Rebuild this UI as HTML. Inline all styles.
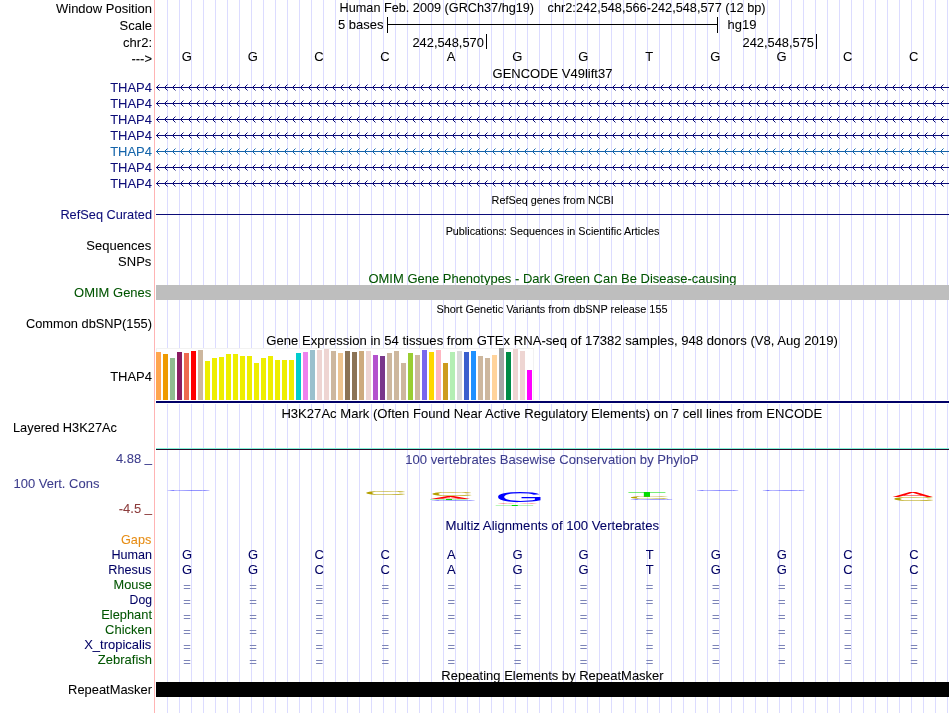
<!DOCTYPE html>
<html lang="en"><head><meta charset="utf-8"><title>UCSC Genome Browser hg19 chr2:242,548,566-242,548,577</title>
<style>html,body{margin:0;padding:0;background:#fff;width:950px;height:713px;overflow:hidden}svg{display:block;position:absolute;left:0;top:0;will-change:transform}text:not([transform]){transform:scaleY(1.045)}text{fill:currentColor;stroke:currentColor;stroke-width:.07px;color:#000;font-family:"Liberation Sans",Arial,Helvetica,sans-serif;font-size:13px;white-space:pre}.s{font-size:10px}.r{text-anchor:end}.m{text-anchor:middle}.n{color:#0c0c78}.g{color:#005500}.p{color:#3c3c8c}.mz{color:#000064}.eq{color:#7c84b8}text[transform]{stroke:none}</style></head><body>
<svg width="950" height="713" viewBox="0 0 950 713">
<path d="M167.5 0V713M179.5 0V713M191.5 0V713M203.5 0V713M215.5 0V713M227.5 0V713M239.5 0V713M251.5 0V713M263.5 0V713M275.5 0V713M287.5 0V713M299.5 0V713M311.5 0V713M323.5 0V713M335.5 0V713M347.5 0V713M359.5 0V713M371.5 0V713M383.5 0V713M395.5 0V713M407.5 0V713M419.5 0V713M431.5 0V713M443.5 0V713M455.5 0V713M467.5 0V713M479.5 0V713M491.5 0V713M503.5 0V713M515.5 0V713M527.5 0V713M539.5 0V713M551.5 0V713M563.5 0V713M575.5 0V713M587.5 0V713M599.5 0V713M611.5 0V713M623.5 0V713M635.5 0V713M647.5 0V713M659.5 0V713M671.5 0V713M683.5 0V713M695.5 0V713M707.5 0V713M719.5 0V713M731.5 0V713M743.5 0V713M755.5 0V713M767.5 0V713M779.5 0V713M791.5 0V713M803.5 0V713M815.5 0V713M827.5 0V713M839.5 0V713M851.5 0V713M863.5 0V713M875.5 0V713M887.5 0V713M899.5 0V713M911.5 0V713M923.5 0V713M935.5 0V713M947.5 0V713" stroke="#dcdcff" stroke-width="1" fill="none" shape-rendering="crispEdges"/>
<path d="M154.5 0V713" stroke="#ffb4b4" stroke-width="1" fill="none" shape-rendering="crispEdges"/>
<text x="152" y="12.44" class="r">Window Position</text>
<text x="152" y="28.71" class="r">Scale</text>
<text x="152" y="44.98" class="r">chr2:</text>
<text x="152" y="60.57" class="r">---&gt;</text>
<text x="339.6" y="11.48" textLength="194.5" lengthAdjust="spacingAndGlyphs">Human Feb. 2009 (GRCh37/hg19)</text>
<text x="547.6" y="11.48" textLength="218" lengthAdjust="spacingAndGlyphs">chr2:242,548,566-242,548,577 (12 bp)</text>
<text x="338" y="27.75">5 bases</text>
<text x="727.5" y="27.75">hg19</text>
<path d="M387.5 17V33M717.5 17V33M387 24.5H718" stroke="#000" stroke-width="1" fill="none" shape-rendering="crispEdges"/>
<text x="483.8" y="44.98" class="r" textLength="71.3" lengthAdjust="spacingAndGlyphs">242,548,570</text>
<text x="813.9" y="44.98" class="r" textLength="71.3" lengthAdjust="spacingAndGlyphs">242,548,575</text>
<path d="M486.5 34V49M816.5 34V49" stroke="#000" stroke-width="1" fill="none" shape-rendering="crispEdges"/>
<text x="186.7" y="58.37" class="m">G</text>
<text x="252.8" y="58.37" class="m">G</text>
<text x="318.9" y="58.37" class="m">C</text>
<text x="385.0" y="58.37" class="m">C</text>
<text x="451.1" y="58.37" class="m">A</text>
<text x="517.2" y="58.37" class="m">G</text>
<text x="583.2" y="58.37" class="m">G</text>
<text x="649.3" y="58.37" class="m">T</text>
<text x="715.4" y="58.37" class="m">G</text>
<text x="781.5" y="58.37" class="m">G</text>
<text x="847.6" y="58.37" class="m">C</text>
<text x="913.7" y="58.37" class="m">C</text>
<text x="552.5" y="74.64" class="m">GENCODE V49lift37</text>
<path d="M156 87.5H949" stroke="#0c0c78" stroke-width="1" fill="none" shape-rendering="crispEdges"/>
<path d="M159.5 84.5L156.5 87.5L159.5 90.5M167.5 84.5L164.5 87.5L167.5 90.5M175.5 84.5L172.5 87.5L175.5 90.5M183.5 84.5L180.5 87.5L183.5 90.5M191.5 84.5L188.5 87.5L191.5 90.5M199.5 84.5L196.5 87.5L199.5 90.5M207.5 84.5L204.5 87.5L207.5 90.5M215.5 84.5L212.5 87.5L215.5 90.5M223.5 84.5L220.5 87.5L223.5 90.5M231.5 84.5L228.5 87.5L231.5 90.5M239.5 84.5L236.5 87.5L239.5 90.5M247.5 84.5L244.5 87.5L247.5 90.5M255.5 84.5L252.5 87.5L255.5 90.5M263.5 84.5L260.5 87.5L263.5 90.5M271.5 84.5L268.5 87.5L271.5 90.5M279.5 84.5L276.5 87.5L279.5 90.5M287.5 84.5L284.5 87.5L287.5 90.5M295.5 84.5L292.5 87.5L295.5 90.5M303.5 84.5L300.5 87.5L303.5 90.5M311.5 84.5L308.5 87.5L311.5 90.5M319.5 84.5L316.5 87.5L319.5 90.5M327.5 84.5L324.5 87.5L327.5 90.5M335.5 84.5L332.5 87.5L335.5 90.5M343.5 84.5L340.5 87.5L343.5 90.5M351.5 84.5L348.5 87.5L351.5 90.5M359.5 84.5L356.5 87.5L359.5 90.5M367.5 84.5L364.5 87.5L367.5 90.5M375.5 84.5L372.5 87.5L375.5 90.5M383.5 84.5L380.5 87.5L383.5 90.5M391.5 84.5L388.5 87.5L391.5 90.5M399.5 84.5L396.5 87.5L399.5 90.5M407.5 84.5L404.5 87.5L407.5 90.5M415.5 84.5L412.5 87.5L415.5 90.5M423.5 84.5L420.5 87.5L423.5 90.5M431.5 84.5L428.5 87.5L431.5 90.5M439.5 84.5L436.5 87.5L439.5 90.5M447.5 84.5L444.5 87.5L447.5 90.5M455.5 84.5L452.5 87.5L455.5 90.5M463.5 84.5L460.5 87.5L463.5 90.5M471.5 84.5L468.5 87.5L471.5 90.5M479.5 84.5L476.5 87.5L479.5 90.5M487.5 84.5L484.5 87.5L487.5 90.5M495.5 84.5L492.5 87.5L495.5 90.5M503.5 84.5L500.5 87.5L503.5 90.5M511.5 84.5L508.5 87.5L511.5 90.5M519.5 84.5L516.5 87.5L519.5 90.5M527.5 84.5L524.5 87.5L527.5 90.5M535.5 84.5L532.5 87.5L535.5 90.5M543.5 84.5L540.5 87.5L543.5 90.5M551.5 84.5L548.5 87.5L551.5 90.5M559.5 84.5L556.5 87.5L559.5 90.5M567.5 84.5L564.5 87.5L567.5 90.5M575.5 84.5L572.5 87.5L575.5 90.5M583.5 84.5L580.5 87.5L583.5 90.5M591.5 84.5L588.5 87.5L591.5 90.5M599.5 84.5L596.5 87.5L599.5 90.5M607.5 84.5L604.5 87.5L607.5 90.5M615.5 84.5L612.5 87.5L615.5 90.5M623.5 84.5L620.5 87.5L623.5 90.5M631.5 84.5L628.5 87.5L631.5 90.5M639.5 84.5L636.5 87.5L639.5 90.5M647.5 84.5L644.5 87.5L647.5 90.5M655.5 84.5L652.5 87.5L655.5 90.5M663.5 84.5L660.5 87.5L663.5 90.5M671.5 84.5L668.5 87.5L671.5 90.5M679.5 84.5L676.5 87.5L679.5 90.5M687.5 84.5L684.5 87.5L687.5 90.5M695.5 84.5L692.5 87.5L695.5 90.5M703.5 84.5L700.5 87.5L703.5 90.5M711.5 84.5L708.5 87.5L711.5 90.5M719.5 84.5L716.5 87.5L719.5 90.5M727.5 84.5L724.5 87.5L727.5 90.5M735.5 84.5L732.5 87.5L735.5 90.5M743.5 84.5L740.5 87.5L743.5 90.5M751.5 84.5L748.5 87.5L751.5 90.5M759.5 84.5L756.5 87.5L759.5 90.5M767.5 84.5L764.5 87.5L767.5 90.5M775.5 84.5L772.5 87.5L775.5 90.5M783.5 84.5L780.5 87.5L783.5 90.5M791.5 84.5L788.5 87.5L791.5 90.5M799.5 84.5L796.5 87.5L799.5 90.5M807.5 84.5L804.5 87.5L807.5 90.5M815.5 84.5L812.5 87.5L815.5 90.5M823.5 84.5L820.5 87.5L823.5 90.5M831.5 84.5L828.5 87.5L831.5 90.5M839.5 84.5L836.5 87.5L839.5 90.5M847.5 84.5L844.5 87.5L847.5 90.5M855.5 84.5L852.5 87.5L855.5 90.5M863.5 84.5L860.5 87.5L863.5 90.5M871.5 84.5L868.5 87.5L871.5 90.5M879.5 84.5L876.5 87.5L879.5 90.5M887.5 84.5L884.5 87.5L887.5 90.5M895.5 84.5L892.5 87.5L895.5 90.5M903.5 84.5L900.5 87.5L903.5 90.5M911.5 84.5L908.5 87.5L911.5 90.5M919.5 84.5L916.5 87.5L919.5 90.5M927.5 84.5L924.5 87.5L927.5 90.5M935.5 84.5L932.5 87.5L935.5 90.5M943.5 84.5L940.5 87.5L943.5 90.5" stroke="#0c0c78" stroke-width="1" fill="none"/>
<text x="152" y="88.04" class="r" style="color:#0c0c78">THAP4</text>
<path d="M156 103.5H949" stroke="#0c0c78" stroke-width="1" fill="none" shape-rendering="crispEdges"/>
<path d="M159.5 100.5L156.5 103.5L159.5 106.5M167.5 100.5L164.5 103.5L167.5 106.5M175.5 100.5L172.5 103.5L175.5 106.5M183.5 100.5L180.5 103.5L183.5 106.5M191.5 100.5L188.5 103.5L191.5 106.5M199.5 100.5L196.5 103.5L199.5 106.5M207.5 100.5L204.5 103.5L207.5 106.5M215.5 100.5L212.5 103.5L215.5 106.5M223.5 100.5L220.5 103.5L223.5 106.5M231.5 100.5L228.5 103.5L231.5 106.5M239.5 100.5L236.5 103.5L239.5 106.5M247.5 100.5L244.5 103.5L247.5 106.5M255.5 100.5L252.5 103.5L255.5 106.5M263.5 100.5L260.5 103.5L263.5 106.5M271.5 100.5L268.5 103.5L271.5 106.5M279.5 100.5L276.5 103.5L279.5 106.5M287.5 100.5L284.5 103.5L287.5 106.5M295.5 100.5L292.5 103.5L295.5 106.5M303.5 100.5L300.5 103.5L303.5 106.5M311.5 100.5L308.5 103.5L311.5 106.5M319.5 100.5L316.5 103.5L319.5 106.5M327.5 100.5L324.5 103.5L327.5 106.5M335.5 100.5L332.5 103.5L335.5 106.5M343.5 100.5L340.5 103.5L343.5 106.5M351.5 100.5L348.5 103.5L351.5 106.5M359.5 100.5L356.5 103.5L359.5 106.5M367.5 100.5L364.5 103.5L367.5 106.5M375.5 100.5L372.5 103.5L375.5 106.5M383.5 100.5L380.5 103.5L383.5 106.5M391.5 100.5L388.5 103.5L391.5 106.5M399.5 100.5L396.5 103.5L399.5 106.5M407.5 100.5L404.5 103.5L407.5 106.5M415.5 100.5L412.5 103.5L415.5 106.5M423.5 100.5L420.5 103.5L423.5 106.5M431.5 100.5L428.5 103.5L431.5 106.5M439.5 100.5L436.5 103.5L439.5 106.5M447.5 100.5L444.5 103.5L447.5 106.5M455.5 100.5L452.5 103.5L455.5 106.5M463.5 100.5L460.5 103.5L463.5 106.5M471.5 100.5L468.5 103.5L471.5 106.5M479.5 100.5L476.5 103.5L479.5 106.5M487.5 100.5L484.5 103.5L487.5 106.5M495.5 100.5L492.5 103.5L495.5 106.5M503.5 100.5L500.5 103.5L503.5 106.5M511.5 100.5L508.5 103.5L511.5 106.5M519.5 100.5L516.5 103.5L519.5 106.5M527.5 100.5L524.5 103.5L527.5 106.5M535.5 100.5L532.5 103.5L535.5 106.5M543.5 100.5L540.5 103.5L543.5 106.5M551.5 100.5L548.5 103.5L551.5 106.5M559.5 100.5L556.5 103.5L559.5 106.5M567.5 100.5L564.5 103.5L567.5 106.5M575.5 100.5L572.5 103.5L575.5 106.5M583.5 100.5L580.5 103.5L583.5 106.5M591.5 100.5L588.5 103.5L591.5 106.5M599.5 100.5L596.5 103.5L599.5 106.5M607.5 100.5L604.5 103.5L607.5 106.5M615.5 100.5L612.5 103.5L615.5 106.5M623.5 100.5L620.5 103.5L623.5 106.5M631.5 100.5L628.5 103.5L631.5 106.5M639.5 100.5L636.5 103.5L639.5 106.5M647.5 100.5L644.5 103.5L647.5 106.5M655.5 100.5L652.5 103.5L655.5 106.5M663.5 100.5L660.5 103.5L663.5 106.5M671.5 100.5L668.5 103.5L671.5 106.5M679.5 100.5L676.5 103.5L679.5 106.5M687.5 100.5L684.5 103.5L687.5 106.5M695.5 100.5L692.5 103.5L695.5 106.5M703.5 100.5L700.5 103.5L703.5 106.5M711.5 100.5L708.5 103.5L711.5 106.5M719.5 100.5L716.5 103.5L719.5 106.5M727.5 100.5L724.5 103.5L727.5 106.5M735.5 100.5L732.5 103.5L735.5 106.5M743.5 100.5L740.5 103.5L743.5 106.5M751.5 100.5L748.5 103.5L751.5 106.5M759.5 100.5L756.5 103.5L759.5 106.5M767.5 100.5L764.5 103.5L767.5 106.5M775.5 100.5L772.5 103.5L775.5 106.5M783.5 100.5L780.5 103.5L783.5 106.5M791.5 100.5L788.5 103.5L791.5 106.5M799.5 100.5L796.5 103.5L799.5 106.5M807.5 100.5L804.5 103.5L807.5 106.5M815.5 100.5L812.5 103.5L815.5 106.5M823.5 100.5L820.5 103.5L823.5 106.5M831.5 100.5L828.5 103.5L831.5 106.5M839.5 100.5L836.5 103.5L839.5 106.5M847.5 100.5L844.5 103.5L847.5 106.5M855.5 100.5L852.5 103.5L855.5 106.5M863.5 100.5L860.5 103.5L863.5 106.5M871.5 100.5L868.5 103.5L871.5 106.5M879.5 100.5L876.5 103.5L879.5 106.5M887.5 100.5L884.5 103.5L887.5 106.5M895.5 100.5L892.5 103.5L895.5 106.5M903.5 100.5L900.5 103.5L903.5 106.5M911.5 100.5L908.5 103.5L911.5 106.5M919.5 100.5L916.5 103.5L919.5 106.5M927.5 100.5L924.5 103.5L927.5 106.5M935.5 100.5L932.5 103.5L935.5 106.5M943.5 100.5L940.5 103.5L943.5 106.5" stroke="#0c0c78" stroke-width="1" fill="none"/>
<text x="152" y="103.35" class="r" style="color:#0c0c78">THAP4</text>
<path d="M156 119.5H949" stroke="#0c0c78" stroke-width="1" fill="none" shape-rendering="crispEdges"/>
<path d="M159.5 116.5L156.5 119.5L159.5 122.5M167.5 116.5L164.5 119.5L167.5 122.5M175.5 116.5L172.5 119.5L175.5 122.5M183.5 116.5L180.5 119.5L183.5 122.5M191.5 116.5L188.5 119.5L191.5 122.5M199.5 116.5L196.5 119.5L199.5 122.5M207.5 116.5L204.5 119.5L207.5 122.5M215.5 116.5L212.5 119.5L215.5 122.5M223.5 116.5L220.5 119.5L223.5 122.5M231.5 116.5L228.5 119.5L231.5 122.5M239.5 116.5L236.5 119.5L239.5 122.5M247.5 116.5L244.5 119.5L247.5 122.5M255.5 116.5L252.5 119.5L255.5 122.5M263.5 116.5L260.5 119.5L263.5 122.5M271.5 116.5L268.5 119.5L271.5 122.5M279.5 116.5L276.5 119.5L279.5 122.5M287.5 116.5L284.5 119.5L287.5 122.5M295.5 116.5L292.5 119.5L295.5 122.5M303.5 116.5L300.5 119.5L303.5 122.5M311.5 116.5L308.5 119.5L311.5 122.5M319.5 116.5L316.5 119.5L319.5 122.5M327.5 116.5L324.5 119.5L327.5 122.5M335.5 116.5L332.5 119.5L335.5 122.5M343.5 116.5L340.5 119.5L343.5 122.5M351.5 116.5L348.5 119.5L351.5 122.5M359.5 116.5L356.5 119.5L359.5 122.5M367.5 116.5L364.5 119.5L367.5 122.5M375.5 116.5L372.5 119.5L375.5 122.5M383.5 116.5L380.5 119.5L383.5 122.5M391.5 116.5L388.5 119.5L391.5 122.5M399.5 116.5L396.5 119.5L399.5 122.5M407.5 116.5L404.5 119.5L407.5 122.5M415.5 116.5L412.5 119.5L415.5 122.5M423.5 116.5L420.5 119.5L423.5 122.5M431.5 116.5L428.5 119.5L431.5 122.5M439.5 116.5L436.5 119.5L439.5 122.5M447.5 116.5L444.5 119.5L447.5 122.5M455.5 116.5L452.5 119.5L455.5 122.5M463.5 116.5L460.5 119.5L463.5 122.5M471.5 116.5L468.5 119.5L471.5 122.5M479.5 116.5L476.5 119.5L479.5 122.5M487.5 116.5L484.5 119.5L487.5 122.5M495.5 116.5L492.5 119.5L495.5 122.5M503.5 116.5L500.5 119.5L503.5 122.5M511.5 116.5L508.5 119.5L511.5 122.5M519.5 116.5L516.5 119.5L519.5 122.5M527.5 116.5L524.5 119.5L527.5 122.5M535.5 116.5L532.5 119.5L535.5 122.5M543.5 116.5L540.5 119.5L543.5 122.5M551.5 116.5L548.5 119.5L551.5 122.5M559.5 116.5L556.5 119.5L559.5 122.5M567.5 116.5L564.5 119.5L567.5 122.5M575.5 116.5L572.5 119.5L575.5 122.5M583.5 116.5L580.5 119.5L583.5 122.5M591.5 116.5L588.5 119.5L591.5 122.5M599.5 116.5L596.5 119.5L599.5 122.5M607.5 116.5L604.5 119.5L607.5 122.5M615.5 116.5L612.5 119.5L615.5 122.5M623.5 116.5L620.5 119.5L623.5 122.5M631.5 116.5L628.5 119.5L631.5 122.5M639.5 116.5L636.5 119.5L639.5 122.5M647.5 116.5L644.5 119.5L647.5 122.5M655.5 116.5L652.5 119.5L655.5 122.5M663.5 116.5L660.5 119.5L663.5 122.5M671.5 116.5L668.5 119.5L671.5 122.5M679.5 116.5L676.5 119.5L679.5 122.5M687.5 116.5L684.5 119.5L687.5 122.5M695.5 116.5L692.5 119.5L695.5 122.5M703.5 116.5L700.5 119.5L703.5 122.5M711.5 116.5L708.5 119.5L711.5 122.5M719.5 116.5L716.5 119.5L719.5 122.5M727.5 116.5L724.5 119.5L727.5 122.5M735.5 116.5L732.5 119.5L735.5 122.5M743.5 116.5L740.5 119.5L743.5 122.5M751.5 116.5L748.5 119.5L751.5 122.5M759.5 116.5L756.5 119.5L759.5 122.5M767.5 116.5L764.5 119.5L767.5 122.5M775.5 116.5L772.5 119.5L775.5 122.5M783.5 116.5L780.5 119.5L783.5 122.5M791.5 116.5L788.5 119.5L791.5 122.5M799.5 116.5L796.5 119.5L799.5 122.5M807.5 116.5L804.5 119.5L807.5 122.5M815.5 116.5L812.5 119.5L815.5 122.5M823.5 116.5L820.5 119.5L823.5 122.5M831.5 116.5L828.5 119.5L831.5 122.5M839.5 116.5L836.5 119.5L839.5 122.5M847.5 116.5L844.5 119.5L847.5 122.5M855.5 116.5L852.5 119.5L855.5 122.5M863.5 116.5L860.5 119.5L863.5 122.5M871.5 116.5L868.5 119.5L871.5 122.5M879.5 116.5L876.5 119.5L879.5 122.5M887.5 116.5L884.5 119.5L887.5 122.5M895.5 116.5L892.5 119.5L895.5 122.5M903.5 116.5L900.5 119.5L903.5 122.5M911.5 116.5L908.5 119.5L911.5 122.5M919.5 116.5L916.5 119.5L919.5 122.5M927.5 116.5L924.5 119.5L927.5 122.5M935.5 116.5L932.5 119.5L935.5 122.5M943.5 116.5L940.5 119.5L943.5 122.5" stroke="#0c0c78" stroke-width="1" fill="none"/>
<text x="152" y="118.66" class="r" style="color:#0c0c78">THAP4</text>
<path d="M156 135.5H949" stroke="#0c0c78" stroke-width="1" fill="none" shape-rendering="crispEdges"/>
<path d="M159.5 132.5L156.5 135.5L159.5 138.5M167.5 132.5L164.5 135.5L167.5 138.5M175.5 132.5L172.5 135.5L175.5 138.5M183.5 132.5L180.5 135.5L183.5 138.5M191.5 132.5L188.5 135.5L191.5 138.5M199.5 132.5L196.5 135.5L199.5 138.5M207.5 132.5L204.5 135.5L207.5 138.5M215.5 132.5L212.5 135.5L215.5 138.5M223.5 132.5L220.5 135.5L223.5 138.5M231.5 132.5L228.5 135.5L231.5 138.5M239.5 132.5L236.5 135.5L239.5 138.5M247.5 132.5L244.5 135.5L247.5 138.5M255.5 132.5L252.5 135.5L255.5 138.5M263.5 132.5L260.5 135.5L263.5 138.5M271.5 132.5L268.5 135.5L271.5 138.5M279.5 132.5L276.5 135.5L279.5 138.5M287.5 132.5L284.5 135.5L287.5 138.5M295.5 132.5L292.5 135.5L295.5 138.5M303.5 132.5L300.5 135.5L303.5 138.5M311.5 132.5L308.5 135.5L311.5 138.5M319.5 132.5L316.5 135.5L319.5 138.5M327.5 132.5L324.5 135.5L327.5 138.5M335.5 132.5L332.5 135.5L335.5 138.5M343.5 132.5L340.5 135.5L343.5 138.5M351.5 132.5L348.5 135.5L351.5 138.5M359.5 132.5L356.5 135.5L359.5 138.5M367.5 132.5L364.5 135.5L367.5 138.5M375.5 132.5L372.5 135.5L375.5 138.5M383.5 132.5L380.5 135.5L383.5 138.5M391.5 132.5L388.5 135.5L391.5 138.5M399.5 132.5L396.5 135.5L399.5 138.5M407.5 132.5L404.5 135.5L407.5 138.5M415.5 132.5L412.5 135.5L415.5 138.5M423.5 132.5L420.5 135.5L423.5 138.5M431.5 132.5L428.5 135.5L431.5 138.5M439.5 132.5L436.5 135.5L439.5 138.5M447.5 132.5L444.5 135.5L447.5 138.5M455.5 132.5L452.5 135.5L455.5 138.5M463.5 132.5L460.5 135.5L463.5 138.5M471.5 132.5L468.5 135.5L471.5 138.5M479.5 132.5L476.5 135.5L479.5 138.5M487.5 132.5L484.5 135.5L487.5 138.5M495.5 132.5L492.5 135.5L495.5 138.5M503.5 132.5L500.5 135.5L503.5 138.5M511.5 132.5L508.5 135.5L511.5 138.5M519.5 132.5L516.5 135.5L519.5 138.5M527.5 132.5L524.5 135.5L527.5 138.5M535.5 132.5L532.5 135.5L535.5 138.5M543.5 132.5L540.5 135.5L543.5 138.5M551.5 132.5L548.5 135.5L551.5 138.5M559.5 132.5L556.5 135.5L559.5 138.5M567.5 132.5L564.5 135.5L567.5 138.5M575.5 132.5L572.5 135.5L575.5 138.5M583.5 132.5L580.5 135.5L583.5 138.5M591.5 132.5L588.5 135.5L591.5 138.5M599.5 132.5L596.5 135.5L599.5 138.5M607.5 132.5L604.5 135.5L607.5 138.5M615.5 132.5L612.5 135.5L615.5 138.5M623.5 132.5L620.5 135.5L623.5 138.5M631.5 132.5L628.5 135.5L631.5 138.5M639.5 132.5L636.5 135.5L639.5 138.5M647.5 132.5L644.5 135.5L647.5 138.5M655.5 132.5L652.5 135.5L655.5 138.5M663.5 132.5L660.5 135.5L663.5 138.5M671.5 132.5L668.5 135.5L671.5 138.5M679.5 132.5L676.5 135.5L679.5 138.5M687.5 132.5L684.5 135.5L687.5 138.5M695.5 132.5L692.5 135.5L695.5 138.5M703.5 132.5L700.5 135.5L703.5 138.5M711.5 132.5L708.5 135.5L711.5 138.5M719.5 132.5L716.5 135.5L719.5 138.5M727.5 132.5L724.5 135.5L727.5 138.5M735.5 132.5L732.5 135.5L735.5 138.5M743.5 132.5L740.5 135.5L743.5 138.5M751.5 132.5L748.5 135.5L751.5 138.5M759.5 132.5L756.5 135.5L759.5 138.5M767.5 132.5L764.5 135.5L767.5 138.5M775.5 132.5L772.5 135.5L775.5 138.5M783.5 132.5L780.5 135.5L783.5 138.5M791.5 132.5L788.5 135.5L791.5 138.5M799.5 132.5L796.5 135.5L799.5 138.5M807.5 132.5L804.5 135.5L807.5 138.5M815.5 132.5L812.5 135.5L815.5 138.5M823.5 132.5L820.5 135.5L823.5 138.5M831.5 132.5L828.5 135.5L831.5 138.5M839.5 132.5L836.5 135.5L839.5 138.5M847.5 132.5L844.5 135.5L847.5 138.5M855.5 132.5L852.5 135.5L855.5 138.5M863.5 132.5L860.5 135.5L863.5 138.5M871.5 132.5L868.5 135.5L871.5 138.5M879.5 132.5L876.5 135.5L879.5 138.5M887.5 132.5L884.5 135.5L887.5 138.5M895.5 132.5L892.5 135.5L895.5 138.5M903.5 132.5L900.5 135.5L903.5 138.5M911.5 132.5L908.5 135.5L911.5 138.5M919.5 132.5L916.5 135.5L919.5 138.5M927.5 132.5L924.5 135.5L927.5 138.5M935.5 132.5L932.5 135.5L935.5 138.5M943.5 132.5L940.5 135.5L943.5 138.5" stroke="#0c0c78" stroke-width="1" fill="none"/>
<text x="152" y="133.97" class="r" style="color:#0c0c78">THAP4</text>
<path d="M156 151.5H949" stroke="#1464aa" stroke-width="1" fill="none" shape-rendering="crispEdges"/>
<path d="M159.5 148.5L156.5 151.5L159.5 154.5M167.5 148.5L164.5 151.5L167.5 154.5M175.5 148.5L172.5 151.5L175.5 154.5M183.5 148.5L180.5 151.5L183.5 154.5M191.5 148.5L188.5 151.5L191.5 154.5M199.5 148.5L196.5 151.5L199.5 154.5M207.5 148.5L204.5 151.5L207.5 154.5M215.5 148.5L212.5 151.5L215.5 154.5M223.5 148.5L220.5 151.5L223.5 154.5M231.5 148.5L228.5 151.5L231.5 154.5M239.5 148.5L236.5 151.5L239.5 154.5M247.5 148.5L244.5 151.5L247.5 154.5M255.5 148.5L252.5 151.5L255.5 154.5M263.5 148.5L260.5 151.5L263.5 154.5M271.5 148.5L268.5 151.5L271.5 154.5M279.5 148.5L276.5 151.5L279.5 154.5M287.5 148.5L284.5 151.5L287.5 154.5M295.5 148.5L292.5 151.5L295.5 154.5M303.5 148.5L300.5 151.5L303.5 154.5M311.5 148.5L308.5 151.5L311.5 154.5M319.5 148.5L316.5 151.5L319.5 154.5M327.5 148.5L324.5 151.5L327.5 154.5M335.5 148.5L332.5 151.5L335.5 154.5M343.5 148.5L340.5 151.5L343.5 154.5M351.5 148.5L348.5 151.5L351.5 154.5M359.5 148.5L356.5 151.5L359.5 154.5M367.5 148.5L364.5 151.5L367.5 154.5M375.5 148.5L372.5 151.5L375.5 154.5M383.5 148.5L380.5 151.5L383.5 154.5M391.5 148.5L388.5 151.5L391.5 154.5M399.5 148.5L396.5 151.5L399.5 154.5M407.5 148.5L404.5 151.5L407.5 154.5M415.5 148.5L412.5 151.5L415.5 154.5M423.5 148.5L420.5 151.5L423.5 154.5M431.5 148.5L428.5 151.5L431.5 154.5M439.5 148.5L436.5 151.5L439.5 154.5M447.5 148.5L444.5 151.5L447.5 154.5M455.5 148.5L452.5 151.5L455.5 154.5M463.5 148.5L460.5 151.5L463.5 154.5M471.5 148.5L468.5 151.5L471.5 154.5M479.5 148.5L476.5 151.5L479.5 154.5M487.5 148.5L484.5 151.5L487.5 154.5M495.5 148.5L492.5 151.5L495.5 154.5M503.5 148.5L500.5 151.5L503.5 154.5M511.5 148.5L508.5 151.5L511.5 154.5M519.5 148.5L516.5 151.5L519.5 154.5M527.5 148.5L524.5 151.5L527.5 154.5M535.5 148.5L532.5 151.5L535.5 154.5M543.5 148.5L540.5 151.5L543.5 154.5M551.5 148.5L548.5 151.5L551.5 154.5M559.5 148.5L556.5 151.5L559.5 154.5M567.5 148.5L564.5 151.5L567.5 154.5M575.5 148.5L572.5 151.5L575.5 154.5M583.5 148.5L580.5 151.5L583.5 154.5M591.5 148.5L588.5 151.5L591.5 154.5M599.5 148.5L596.5 151.5L599.5 154.5M607.5 148.5L604.5 151.5L607.5 154.5M615.5 148.5L612.5 151.5L615.5 154.5M623.5 148.5L620.5 151.5L623.5 154.5M631.5 148.5L628.5 151.5L631.5 154.5M639.5 148.5L636.5 151.5L639.5 154.5M647.5 148.5L644.5 151.5L647.5 154.5M655.5 148.5L652.5 151.5L655.5 154.5M663.5 148.5L660.5 151.5L663.5 154.5M671.5 148.5L668.5 151.5L671.5 154.5M679.5 148.5L676.5 151.5L679.5 154.5M687.5 148.5L684.5 151.5L687.5 154.5M695.5 148.5L692.5 151.5L695.5 154.5M703.5 148.5L700.5 151.5L703.5 154.5M711.5 148.5L708.5 151.5L711.5 154.5M719.5 148.5L716.5 151.5L719.5 154.5M727.5 148.5L724.5 151.5L727.5 154.5M735.5 148.5L732.5 151.5L735.5 154.5M743.5 148.5L740.5 151.5L743.5 154.5M751.5 148.5L748.5 151.5L751.5 154.5M759.5 148.5L756.5 151.5L759.5 154.5M767.5 148.5L764.5 151.5L767.5 154.5M775.5 148.5L772.5 151.5L775.5 154.5M783.5 148.5L780.5 151.5L783.5 154.5M791.5 148.5L788.5 151.5L791.5 154.5M799.5 148.5L796.5 151.5L799.5 154.5M807.5 148.5L804.5 151.5L807.5 154.5M815.5 148.5L812.5 151.5L815.5 154.5M823.5 148.5L820.5 151.5L823.5 154.5M831.5 148.5L828.5 151.5L831.5 154.5M839.5 148.5L836.5 151.5L839.5 154.5M847.5 148.5L844.5 151.5L847.5 154.5M855.5 148.5L852.5 151.5L855.5 154.5M863.5 148.5L860.5 151.5L863.5 154.5M871.5 148.5L868.5 151.5L871.5 154.5M879.5 148.5L876.5 151.5L879.5 154.5M887.5 148.5L884.5 151.5L887.5 154.5M895.5 148.5L892.5 151.5L895.5 154.5M903.5 148.5L900.5 151.5L903.5 154.5M911.5 148.5L908.5 151.5L911.5 154.5M919.5 148.5L916.5 151.5L919.5 154.5M927.5 148.5L924.5 151.5L927.5 154.5M935.5 148.5L932.5 151.5L935.5 154.5M943.5 148.5L940.5 151.5L943.5 154.5" stroke="#1464aa" stroke-width="1" fill="none"/>
<text x="152" y="149.28" class="r" style="color:#1464aa">THAP4</text>
<path d="M156 167.5H949" stroke="#0c0c78" stroke-width="1" fill="none" shape-rendering="crispEdges"/>
<path d="M159.5 164.5L156.5 167.5L159.5 170.5M167.5 164.5L164.5 167.5L167.5 170.5M175.5 164.5L172.5 167.5L175.5 170.5M183.5 164.5L180.5 167.5L183.5 170.5M191.5 164.5L188.5 167.5L191.5 170.5M199.5 164.5L196.5 167.5L199.5 170.5M207.5 164.5L204.5 167.5L207.5 170.5M215.5 164.5L212.5 167.5L215.5 170.5M223.5 164.5L220.5 167.5L223.5 170.5M231.5 164.5L228.5 167.5L231.5 170.5M239.5 164.5L236.5 167.5L239.5 170.5M247.5 164.5L244.5 167.5L247.5 170.5M255.5 164.5L252.5 167.5L255.5 170.5M263.5 164.5L260.5 167.5L263.5 170.5M271.5 164.5L268.5 167.5L271.5 170.5M279.5 164.5L276.5 167.5L279.5 170.5M287.5 164.5L284.5 167.5L287.5 170.5M295.5 164.5L292.5 167.5L295.5 170.5M303.5 164.5L300.5 167.5L303.5 170.5M311.5 164.5L308.5 167.5L311.5 170.5M319.5 164.5L316.5 167.5L319.5 170.5M327.5 164.5L324.5 167.5L327.5 170.5M335.5 164.5L332.5 167.5L335.5 170.5M343.5 164.5L340.5 167.5L343.5 170.5M351.5 164.5L348.5 167.5L351.5 170.5M359.5 164.5L356.5 167.5L359.5 170.5M367.5 164.5L364.5 167.5L367.5 170.5M375.5 164.5L372.5 167.5L375.5 170.5M383.5 164.5L380.5 167.5L383.5 170.5M391.5 164.5L388.5 167.5L391.5 170.5M399.5 164.5L396.5 167.5L399.5 170.5M407.5 164.5L404.5 167.5L407.5 170.5M415.5 164.5L412.5 167.5L415.5 170.5M423.5 164.5L420.5 167.5L423.5 170.5M431.5 164.5L428.5 167.5L431.5 170.5M439.5 164.5L436.5 167.5L439.5 170.5M447.5 164.5L444.5 167.5L447.5 170.5M455.5 164.5L452.5 167.5L455.5 170.5M463.5 164.5L460.5 167.5L463.5 170.5M471.5 164.5L468.5 167.5L471.5 170.5M479.5 164.5L476.5 167.5L479.5 170.5M487.5 164.5L484.5 167.5L487.5 170.5M495.5 164.5L492.5 167.5L495.5 170.5M503.5 164.5L500.5 167.5L503.5 170.5M511.5 164.5L508.5 167.5L511.5 170.5M519.5 164.5L516.5 167.5L519.5 170.5M527.5 164.5L524.5 167.5L527.5 170.5M535.5 164.5L532.5 167.5L535.5 170.5M543.5 164.5L540.5 167.5L543.5 170.5M551.5 164.5L548.5 167.5L551.5 170.5M559.5 164.5L556.5 167.5L559.5 170.5M567.5 164.5L564.5 167.5L567.5 170.5M575.5 164.5L572.5 167.5L575.5 170.5M583.5 164.5L580.5 167.5L583.5 170.5M591.5 164.5L588.5 167.5L591.5 170.5M599.5 164.5L596.5 167.5L599.5 170.5M607.5 164.5L604.5 167.5L607.5 170.5M615.5 164.5L612.5 167.5L615.5 170.5M623.5 164.5L620.5 167.5L623.5 170.5M631.5 164.5L628.5 167.5L631.5 170.5M639.5 164.5L636.5 167.5L639.5 170.5M647.5 164.5L644.5 167.5L647.5 170.5M655.5 164.5L652.5 167.5L655.5 170.5M663.5 164.5L660.5 167.5L663.5 170.5M671.5 164.5L668.5 167.5L671.5 170.5M679.5 164.5L676.5 167.5L679.5 170.5M687.5 164.5L684.5 167.5L687.5 170.5M695.5 164.5L692.5 167.5L695.5 170.5M703.5 164.5L700.5 167.5L703.5 170.5M711.5 164.5L708.5 167.5L711.5 170.5M719.5 164.5L716.5 167.5L719.5 170.5M727.5 164.5L724.5 167.5L727.5 170.5M735.5 164.5L732.5 167.5L735.5 170.5M743.5 164.5L740.5 167.5L743.5 170.5M751.5 164.5L748.5 167.5L751.5 170.5M759.5 164.5L756.5 167.5L759.5 170.5M767.5 164.5L764.5 167.5L767.5 170.5M775.5 164.5L772.5 167.5L775.5 170.5M783.5 164.5L780.5 167.5L783.5 170.5M791.5 164.5L788.5 167.5L791.5 170.5M799.5 164.5L796.5 167.5L799.5 170.5M807.5 164.5L804.5 167.5L807.5 170.5M815.5 164.5L812.5 167.5L815.5 170.5M823.5 164.5L820.5 167.5L823.5 170.5M831.5 164.5L828.5 167.5L831.5 170.5M839.5 164.5L836.5 167.5L839.5 170.5M847.5 164.5L844.5 167.5L847.5 170.5M855.5 164.5L852.5 167.5L855.5 170.5M863.5 164.5L860.5 167.5L863.5 170.5M871.5 164.5L868.5 167.5L871.5 170.5M879.5 164.5L876.5 167.5L879.5 170.5M887.5 164.5L884.5 167.5L887.5 170.5M895.5 164.5L892.5 167.5L895.5 170.5M903.5 164.5L900.5 167.5L903.5 170.5M911.5 164.5L908.5 167.5L911.5 170.5M919.5 164.5L916.5 167.5L919.5 170.5M927.5 164.5L924.5 167.5L927.5 170.5M935.5 164.5L932.5 167.5L935.5 170.5M943.5 164.5L940.5 167.5L943.5 170.5" stroke="#0c0c78" stroke-width="1" fill="none"/>
<text x="152" y="164.59" class="r" style="color:#0c0c78">THAP4</text>
<path d="M156 183.5H949" stroke="#0c0c78" stroke-width="1" fill="none" shape-rendering="crispEdges"/>
<path d="M159.5 180.5L156.5 183.5L159.5 186.5M167.5 180.5L164.5 183.5L167.5 186.5M175.5 180.5L172.5 183.5L175.5 186.5M183.5 180.5L180.5 183.5L183.5 186.5M191.5 180.5L188.5 183.5L191.5 186.5M199.5 180.5L196.5 183.5L199.5 186.5M207.5 180.5L204.5 183.5L207.5 186.5M215.5 180.5L212.5 183.5L215.5 186.5M223.5 180.5L220.5 183.5L223.5 186.5M231.5 180.5L228.5 183.5L231.5 186.5M239.5 180.5L236.5 183.5L239.5 186.5M247.5 180.5L244.5 183.5L247.5 186.5M255.5 180.5L252.5 183.5L255.5 186.5M263.5 180.5L260.5 183.5L263.5 186.5M271.5 180.5L268.5 183.5L271.5 186.5M279.5 180.5L276.5 183.5L279.5 186.5M287.5 180.5L284.5 183.5L287.5 186.5M295.5 180.5L292.5 183.5L295.5 186.5M303.5 180.5L300.5 183.5L303.5 186.5M311.5 180.5L308.5 183.5L311.5 186.5M319.5 180.5L316.5 183.5L319.5 186.5M327.5 180.5L324.5 183.5L327.5 186.5M335.5 180.5L332.5 183.5L335.5 186.5M343.5 180.5L340.5 183.5L343.5 186.5M351.5 180.5L348.5 183.5L351.5 186.5M359.5 180.5L356.5 183.5L359.5 186.5M367.5 180.5L364.5 183.5L367.5 186.5M375.5 180.5L372.5 183.5L375.5 186.5M383.5 180.5L380.5 183.5L383.5 186.5M391.5 180.5L388.5 183.5L391.5 186.5M399.5 180.5L396.5 183.5L399.5 186.5M407.5 180.5L404.5 183.5L407.5 186.5M415.5 180.5L412.5 183.5L415.5 186.5M423.5 180.5L420.5 183.5L423.5 186.5M431.5 180.5L428.5 183.5L431.5 186.5M439.5 180.5L436.5 183.5L439.5 186.5M447.5 180.5L444.5 183.5L447.5 186.5M455.5 180.5L452.5 183.5L455.5 186.5M463.5 180.5L460.5 183.5L463.5 186.5M471.5 180.5L468.5 183.5L471.5 186.5M479.5 180.5L476.5 183.5L479.5 186.5M487.5 180.5L484.5 183.5L487.5 186.5M495.5 180.5L492.5 183.5L495.5 186.5M503.5 180.5L500.5 183.5L503.5 186.5M511.5 180.5L508.5 183.5L511.5 186.5M519.5 180.5L516.5 183.5L519.5 186.5M527.5 180.5L524.5 183.5L527.5 186.5M535.5 180.5L532.5 183.5L535.5 186.5M543.5 180.5L540.5 183.5L543.5 186.5M551.5 180.5L548.5 183.5L551.5 186.5M559.5 180.5L556.5 183.5L559.5 186.5M567.5 180.5L564.5 183.5L567.5 186.5M575.5 180.5L572.5 183.5L575.5 186.5M583.5 180.5L580.5 183.5L583.5 186.5M591.5 180.5L588.5 183.5L591.5 186.5M599.5 180.5L596.5 183.5L599.5 186.5M607.5 180.5L604.5 183.5L607.5 186.5M615.5 180.5L612.5 183.5L615.5 186.5M623.5 180.5L620.5 183.5L623.5 186.5M631.5 180.5L628.5 183.5L631.5 186.5M639.5 180.5L636.5 183.5L639.5 186.5M647.5 180.5L644.5 183.5L647.5 186.5M655.5 180.5L652.5 183.5L655.5 186.5M663.5 180.5L660.5 183.5L663.5 186.5M671.5 180.5L668.5 183.5L671.5 186.5M679.5 180.5L676.5 183.5L679.5 186.5M687.5 180.5L684.5 183.5L687.5 186.5M695.5 180.5L692.5 183.5L695.5 186.5M703.5 180.5L700.5 183.5L703.5 186.5M711.5 180.5L708.5 183.5L711.5 186.5M719.5 180.5L716.5 183.5L719.5 186.5M727.5 180.5L724.5 183.5L727.5 186.5M735.5 180.5L732.5 183.5L735.5 186.5M743.5 180.5L740.5 183.5L743.5 186.5M751.5 180.5L748.5 183.5L751.5 186.5M759.5 180.5L756.5 183.5L759.5 186.5M767.5 180.5L764.5 183.5L767.5 186.5M775.5 180.5L772.5 183.5L775.5 186.5M783.5 180.5L780.5 183.5L783.5 186.5M791.5 180.5L788.5 183.5L791.5 186.5M799.5 180.5L796.5 183.5L799.5 186.5M807.5 180.5L804.5 183.5L807.5 186.5M815.5 180.5L812.5 183.5L815.5 186.5M823.5 180.5L820.5 183.5L823.5 186.5M831.5 180.5L828.5 183.5L831.5 186.5M839.5 180.5L836.5 183.5L839.5 186.5M847.5 180.5L844.5 183.5L847.5 186.5M855.5 180.5L852.5 183.5L855.5 186.5M863.5 180.5L860.5 183.5L863.5 186.5M871.5 180.5L868.5 183.5L871.5 186.5M879.5 180.5L876.5 183.5L879.5 186.5M887.5 180.5L884.5 183.5L887.5 186.5M895.5 180.5L892.5 183.5L895.5 186.5M903.5 180.5L900.5 183.5L903.5 186.5M911.5 180.5L908.5 183.5L911.5 186.5M919.5 180.5L916.5 183.5L919.5 186.5M927.5 180.5L924.5 183.5L927.5 186.5M935.5 180.5L932.5 183.5L935.5 186.5M943.5 180.5L940.5 183.5L943.5 186.5" stroke="#0c0c78" stroke-width="1" fill="none"/>
<text x="152" y="179.9" class="r" style="color:#0c0c78">THAP4</text>
<text x="552.7" y="195.22" class="m s" textLength="122.2" lengthAdjust="spacingAndGlyphs">RefSeq genes from NCBI</text>
<text x="152" y="209.57" class="r n" textLength="91.6" lengthAdjust="spacingAndGlyphs">RefSeq Curated</text>
<path d="M156 214.5H949" stroke="#0c0c78" stroke-width="1" fill="none" shape-rendering="crispEdges"/>
<text x="552.5" y="224.88" class="m s" textLength="213.7" lengthAdjust="spacingAndGlyphs">Publications: Sequences in Scientific Articles</text>
<text x="151.3" y="239.23" class="r">Sequences</text>
<text x="151.3" y="254.55" class="r">SNPs</text>
<text x="552.5" y="270.81" class="m g">OMIM Gene Phenotypes - Dark Green Can Be Disease-causing</text>
<text x="151.3" y="284.21" class="r g">OMIM Genes</text>
<rect x="156" y="285" width="793" height="15" fill="#bebebe"/>
<text x="552" y="299.52" class="m s" textLength="231.1" lengthAdjust="spacingAndGlyphs">Short Genetic Variants from dbSNP release 155</text>
<text x="152" y="313.88" class="r" textLength="126" lengthAdjust="spacingAndGlyphs">Common dbSNP(155)</text>
<rect x="156.5" y="348.5" width="377" height="52" fill="#fff" stroke="#f2f2f2" shape-rendering="crispEdges"/>
<rect x="156" y="352" width="5" height="48" fill="#FFA54F"/>
<rect x="163" y="354" width="5" height="46" fill="#EE9A00"/>
<rect x="170" y="358" width="5" height="42" fill="#8FBC8F"/>
<rect x="177" y="352" width="5" height="48" fill="#8B1C62"/>
<rect x="184" y="353" width="5" height="47" fill="#EE6A50"/>
<rect x="191" y="351" width="5" height="49" fill="#FF0000"/>
<rect x="198" y="350" width="5" height="50" fill="#CDB79E"/>
<rect x="205" y="361" width="5" height="39" fill="#EEEE00"/>
<rect x="212" y="358" width="5" height="42" fill="#EEEE00"/>
<rect x="219" y="357" width="5" height="43" fill="#EEEE00"/>
<rect x="226" y="354" width="5" height="46" fill="#EEEE00"/>
<rect x="233" y="354" width="5" height="46" fill="#EEEE00"/>
<rect x="240" y="356" width="5" height="44" fill="#EEEE00"/>
<rect x="247" y="356" width="5" height="44" fill="#EEEE00"/>
<rect x="254" y="363" width="5" height="37" fill="#EEEE00"/>
<rect x="261" y="358" width="5" height="42" fill="#EEEE00"/>
<rect x="268" y="356" width="5" height="44" fill="#EEEE00"/>
<rect x="275" y="360" width="5" height="40" fill="#EEEE00"/>
<rect x="282" y="360" width="5" height="40" fill="#EEEE00"/>
<rect x="289" y="360" width="5" height="40" fill="#EEEE00"/>
<rect x="296" y="353" width="5" height="47" fill="#00CDCD"/>
<rect x="303" y="352" width="5" height="48" fill="#EE82EE"/>
<rect x="310" y="350" width="5" height="50" fill="#9AC0CD"/>
<rect x="317" y="350" width="5" height="50" fill="#EED5D2"/>
<rect x="324" y="349" width="5" height="51" fill="#EED5D2"/>
<rect x="331" y="351" width="5" height="49" fill="#CDB79E"/>
<rect x="338" y="353" width="5" height="47" fill="#EEC591"/>
<rect x="345" y="351" width="5" height="49" fill="#8B7355"/>
<rect x="352" y="352" width="5" height="48" fill="#8B7355"/>
<rect x="359" y="351" width="5" height="49" fill="#CDAA7D"/>
<rect x="366" y="351" width="5" height="49" fill="#EED5D2"/>
<rect x="373" y="355" width="5" height="45" fill="#B452CD"/>
<rect x="380" y="356" width="5" height="44" fill="#7A378B"/>
<rect x="387" y="353" width="5" height="47" fill="#CDB79E"/>
<rect x="394" y="351" width="5" height="49" fill="#CDB79E"/>
<rect x="401" y="363" width="5" height="37" fill="#CDB79E"/>
<rect x="408" y="353" width="5" height="47" fill="#9ACD32"/>
<rect x="415" y="355" width="5" height="45" fill="#CDB79E"/>
<rect x="422" y="350" width="5" height="50" fill="#7A67EE"/>
<rect x="429" y="352" width="5" height="48" fill="#FFD700"/>
<rect x="436" y="350" width="5" height="50" fill="#FFB6C1"/>
<rect x="443" y="363" width="5" height="37" fill="#CD9B1D"/>
<rect x="450" y="352" width="5" height="48" fill="#B4EEB4"/>
<rect x="457" y="351" width="5" height="49" fill="#D9D9D9"/>
<rect x="464" y="352" width="5" height="48" fill="#3A5FCD"/>
<rect x="471" y="351" width="5" height="49" fill="#1E90FF"/>
<rect x="478" y="356" width="5" height="44" fill="#CDB79E"/>
<rect x="485" y="358" width="5" height="42" fill="#CDB79E"/>
<rect x="492" y="355" width="5" height="45" fill="#FFD39B"/>
<rect x="499" y="348" width="5" height="52" fill="#A6A6A6"/>
<rect x="506" y="352" width="5" height="48" fill="#008B45"/>
<rect x="513" y="349" width="5" height="51" fill="#EED5D2"/>
<rect x="520" y="351" width="5" height="49" fill="#EED5D2"/>
<rect x="527" y="370" width="5" height="30" fill="#FF00FF"/>
<rect x="156" y="400" width="793" height="4" fill="#fff"/>
<rect x="156" y="401" width="793" height="2" fill="#000068"/>
<text x="552.05" y="330.14" class="m" textLength="571.5" lengthAdjust="spacingAndGlyphs">Gene Expression in 54 tissues from GTEx RNA-seq of 17382 samples, 948 donors (V8, Aug 2019)</text>
<text x="152" y="364.59" class="r">THAP4</text>
<text x="551.85" y="400.0" class="m" textLength="540.9" lengthAdjust="spacingAndGlyphs">H3K27Ac Mark (Often Found Near Active Regulatory Elements) on 7 cell lines from ENCODE</text>
<text x="13" y="413.4" textLength="104" lengthAdjust="spacingAndGlyphs">Layered H3K27Ac</text>
<rect x="156" y="448" width="793" height="1" fill="#80f0d8"/>
<rect x="156" y="449" width="793" height="1" fill="#280a28"/>
<text x="552" y="444.02" class="m p" textLength="293.4" lengthAdjust="spacingAndGlyphs">100 vertebrates Basewise Conservation by PhyloP</text>
<text x="152" y="443.06" class="r p">4.88 <tspan dy="-0.8">_</tspan></text>
<text x="13.5" y="466.99" class="p">100 Vert. Cons</text>
<text x="152" y="490.91" class="r" style="color:#8c3c3c">-4.5 <tspan dy="-0.8">_</tspan></text>
<text transform="translate(164.28 490.98) scale(0.6439 0.0197)" style="font-size:100px;fill:#0000ff" opacity=0.85>G</text>
<text transform="translate(362.88 495.15) scale(0.6250 0.0451)" style="font-size:100px;fill:#b4a000">C</text>
<text transform="translate(429.17 495.75) scale(0.6266 0.0535)" style="font-size:100px;fill:#b4a000">C</text>
<text transform="translate(430.50 498.60) scale(0.5970 0.0420)" style="font-size:100px;fill:#ff0000">A</text>
<text transform="translate(428.67 499.80) scale(0.6667 0.0174)" style="font-size:100px;fill:#00dc00">T</text>
<text transform="translate(428.74 500.88) scale(0.6515 0.0169)" style="font-size:100px;fill:#0000ff" opacity=0.75>G</text>
<text transform="translate(494.74 502.06) scale(0.6515 0.1437)" style="font-size:100px;fill:#0000ff">G</text>
<text transform="translate(497.00 504.10) scale(0.6119 0.0203)" style="font-size:100px;fill:#ff0000">A</text>
<text transform="translate(494.47 505.60) scale(0.6667 0.0174)" style="font-size:100px;fill:#00dc00">T</text>
<text transform="translate(626.99 497.00) scale(0.6544 0.0783)" style="font-size:100px;fill:#00dc00">T</text>
<text transform="translate(627.71 498.97) scale(0.5984 0.0310)" style="font-size:100px;fill:#b4a000">C</text>
<text transform="translate(627.50 500.08) scale(0.6409 0.0169)" style="font-size:100px;fill:#0000ff" opacity=0.75>G</text>
<text transform="translate(693.62 490.98) scale(0.6364 0.0183)" style="font-size:100px;fill:#0000ff" opacity=0.85>G</text>
<text transform="translate(759.28 490.98) scale(0.6439 0.0183)" style="font-size:100px;fill:#0000ff" opacity=0.85>G</text>
<text transform="translate(892.60 497.10) scale(0.6060 0.0768)" style="font-size:100px;fill:#ff0000">A</text>
<text transform="translate(890.88 500.75) scale(0.6250 0.0479)" style="font-size:100px;fill:#b4a000">C</text>
<text x="552.35" y="507.18" class="m mz" textLength="213.5" lengthAdjust="spacingAndGlyphs">Multiz Alignments of 100 Vertebrates</text>
<text x="151.3" y="520.57" class="r" style="color:#e68c14" textLength="30.3" lengthAdjust="spacingAndGlyphs">Gaps</text>
<text x="152" y="534.93" class="r mz" textLength="40.6" lengthAdjust="spacingAndGlyphs">Human</text>
<text x="187.0" y="534.93" class="m mz">G</text>
<text x="253.1" y="534.93" class="m mz">G</text>
<text x="319.2" y="534.93" class="m mz">C</text>
<text x="385.3" y="534.93" class="m mz">C</text>
<text x="451.4" y="534.93" class="m mz">A</text>
<text x="517.5" y="534.93" class="m mz">G</text>
<text x="583.5" y="534.93" class="m mz">G</text>
<text x="649.6" y="534.93" class="m mz">T</text>
<text x="715.7" y="534.93" class="m mz">G</text>
<text x="781.8" y="534.93" class="m mz">G</text>
<text x="847.9" y="534.93" class="m mz">C</text>
<text x="914.0" y="534.93" class="m mz">C</text>
<text x="151.3" y="549.28" class="r mz" textLength="43" lengthAdjust="spacingAndGlyphs">Rhesus</text>
<text x="187.0" y="549.28" class="m mz">G</text>
<text x="253.1" y="549.28" class="m mz">G</text>
<text x="319.2" y="549.28" class="m mz">C</text>
<text x="385.3" y="549.28" class="m mz">C</text>
<text x="451.4" y="549.28" class="m mz">A</text>
<text x="517.5" y="549.28" class="m mz">G</text>
<text x="583.5" y="549.28" class="m mz">G</text>
<text x="649.6" y="549.28" class="m mz">T</text>
<text x="715.7" y="549.28" class="m mz">G</text>
<text x="781.8" y="549.28" class="m mz">G</text>
<text x="847.9" y="549.28" class="m mz">C</text>
<text x="914.0" y="549.28" class="m mz">C</text>
<text x="152" y="563.64" class="r g" textLength="38.4" lengthAdjust="spacingAndGlyphs">Mouse</text>
<text x="187.0" y="565.55" class="m eq">=</text>
<text x="253.1" y="565.55" class="m eq">=</text>
<text x="319.2" y="565.55" class="m eq">=</text>
<text x="385.3" y="565.55" class="m eq">=</text>
<text x="451.4" y="565.55" class="m eq">=</text>
<text x="517.5" y="565.55" class="m eq">=</text>
<text x="583.5" y="565.55" class="m eq">=</text>
<text x="649.6" y="565.55" class="m eq">=</text>
<text x="715.7" y="565.55" class="m eq">=</text>
<text x="781.8" y="565.55" class="m eq">=</text>
<text x="847.9" y="565.55" class="m eq">=</text>
<text x="914.0" y="565.55" class="m eq">=</text>
<text x="152" y="577.99" class="r mz" textLength="22.4" lengthAdjust="spacingAndGlyphs">Dog</text>
<text x="187.0" y="579.9" class="m eq">=</text>
<text x="253.1" y="579.9" class="m eq">=</text>
<text x="319.2" y="579.9" class="m eq">=</text>
<text x="385.3" y="579.9" class="m eq">=</text>
<text x="451.4" y="579.9" class="m eq">=</text>
<text x="517.5" y="579.9" class="m eq">=</text>
<text x="583.5" y="579.9" class="m eq">=</text>
<text x="649.6" y="579.9" class="m eq">=</text>
<text x="715.7" y="579.9" class="m eq">=</text>
<text x="781.8" y="579.9" class="m eq">=</text>
<text x="847.9" y="579.9" class="m eq">=</text>
<text x="914.0" y="579.9" class="m eq">=</text>
<text x="152" y="592.34" class="r g" textLength="50.8" lengthAdjust="spacingAndGlyphs">Elephant</text>
<text x="187.0" y="594.26" class="m eq">=</text>
<text x="253.1" y="594.26" class="m eq">=</text>
<text x="319.2" y="594.26" class="m eq">=</text>
<text x="385.3" y="594.26" class="m eq">=</text>
<text x="451.4" y="594.26" class="m eq">=</text>
<text x="517.5" y="594.26" class="m eq">=</text>
<text x="583.5" y="594.26" class="m eq">=</text>
<text x="649.6" y="594.26" class="m eq">=</text>
<text x="715.7" y="594.26" class="m eq">=</text>
<text x="781.8" y="594.26" class="m eq">=</text>
<text x="847.9" y="594.26" class="m eq">=</text>
<text x="914.0" y="594.26" class="m eq">=</text>
<text x="152" y="606.7" class="r g">Chicken</text>
<text x="187.0" y="608.61" class="m eq">=</text>
<text x="253.1" y="608.61" class="m eq">=</text>
<text x="319.2" y="608.61" class="m eq">=</text>
<text x="385.3" y="608.61" class="m eq">=</text>
<text x="451.4" y="608.61" class="m eq">=</text>
<text x="517.5" y="608.61" class="m eq">=</text>
<text x="583.5" y="608.61" class="m eq">=</text>
<text x="649.6" y="608.61" class="m eq">=</text>
<text x="715.7" y="608.61" class="m eq">=</text>
<text x="781.8" y="608.61" class="m eq">=</text>
<text x="847.9" y="608.61" class="m eq">=</text>
<text x="914.0" y="608.61" class="m eq">=</text>
<text x="151.3" y="621.05" class="r mz">X_tropicalis</text>
<text x="187.0" y="622.97" class="m eq">=</text>
<text x="253.1" y="622.97" class="m eq">=</text>
<text x="319.2" y="622.97" class="m eq">=</text>
<text x="385.3" y="622.97" class="m eq">=</text>
<text x="451.4" y="622.97" class="m eq">=</text>
<text x="517.5" y="622.97" class="m eq">=</text>
<text x="583.5" y="622.97" class="m eq">=</text>
<text x="649.6" y="622.97" class="m eq">=</text>
<text x="715.7" y="622.97" class="m eq">=</text>
<text x="781.8" y="622.97" class="m eq">=</text>
<text x="847.9" y="622.97" class="m eq">=</text>
<text x="914.0" y="622.97" class="m eq">=</text>
<text x="152" y="635.41" class="r g">Zebrafish</text>
<text x="187.0" y="637.32" class="m eq">=</text>
<text x="253.1" y="637.32" class="m eq">=</text>
<text x="319.2" y="637.32" class="m eq">=</text>
<text x="385.3" y="637.32" class="m eq">=</text>
<text x="451.4" y="637.32" class="m eq">=</text>
<text x="517.5" y="637.32" class="m eq">=</text>
<text x="583.5" y="637.32" class="m eq">=</text>
<text x="649.6" y="637.32" class="m eq">=</text>
<text x="715.7" y="637.32" class="m eq">=</text>
<text x="781.8" y="637.32" class="m eq">=</text>
<text x="847.9" y="637.32" class="m eq">=</text>
<text x="914.0" y="637.32" class="m eq">=</text>
<text x="552.5" y="650.72" class="m">Repeating Elements by RepeatMasker</text>
<text x="152" y="664.11" class="r" textLength="83.9" lengthAdjust="spacingAndGlyphs">RepeatMasker</text>
<rect x="156" y="682" width="793" height="15" fill="#000"/>
</svg></body></html>
